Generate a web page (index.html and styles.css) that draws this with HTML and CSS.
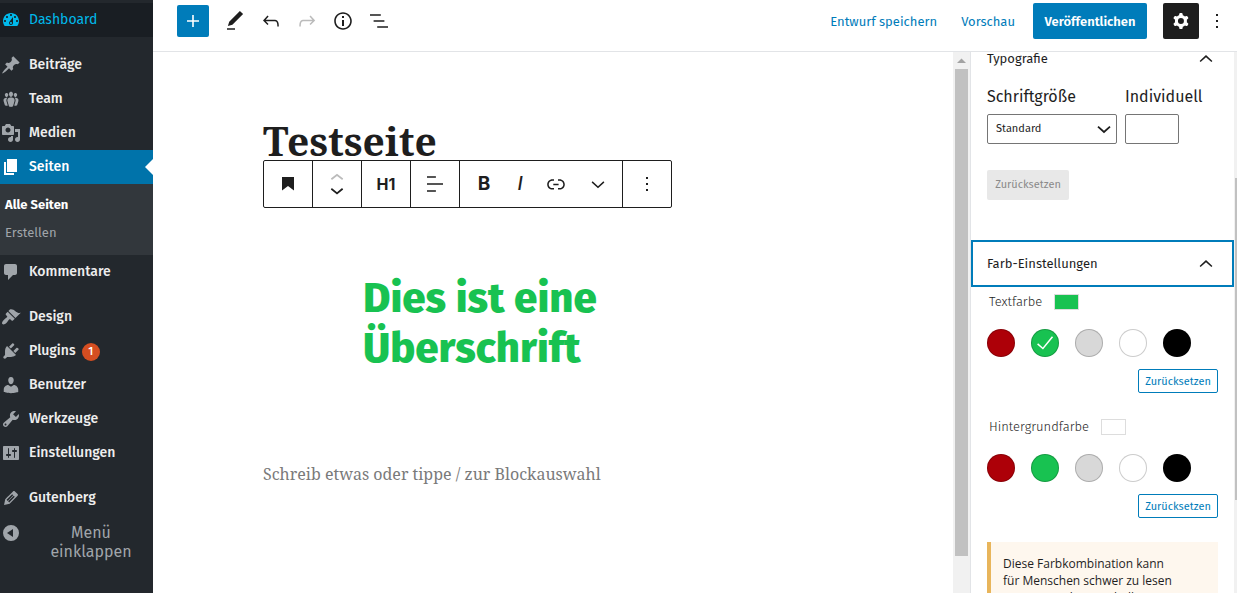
FILE: index.html
```html
<!DOCTYPE html>
<html lang="de">
<head>
<meta charset="utf-8">
<meta name="viewport" content="width=device-width, initial-scale=1">
<title>Testseite bearbeiten</title>
<link rel="stylesheet" href="styles.css">
</head>
<body>
<nav class="menu" aria-label="Hauptmenü">
  <ul class="menu-group">
    <li><a class="menu-item is-hover" href="#"><svg class="dash" viewBox="0 0 20 20"><path d="M3.76 16h12.48c1.1-1.37 1.76-3.11 1.76-5 0-4.42-3.58-8-8-8s-8 3.58-8 8c0 1.89.66 3.63 1.76 5zM10 4c.55 0 1 .45 1 1s-.45 1-1 1-1-.45-1-1 .45-1 1-1zM6 6c.55 0 1 .45 1 1s-.45 1-1 1-1-.45-1-1 .45-1 1-1zm8 0c.55 0 1 .45 1 1s-.45 1-1 1-1-.45-1-1 .45-1 1-1zm-5.370 5.550L12 7v6c0 1.100-.9 2-2 2s-2-.9-2-2c0-.57.24-1.080.63-1.450zM4 10c.55 0 1 .45 1 1s-.45 1-1 1-1-.45-1-1 .45-1 1-1zm12 0c.55 0 1 .45 1 1s-.45 1-1 1-1-.45-1-1 .45-1 1-1zm-5 3c0-.55-.45-1-1-1s-1 .45-1 1 .45 1 1 1 1-.45 1-1z"/></svg>Dashboard</a></li>
  </ul>
  <ul class="menu-group">
    <li><a class="menu-item" href="#"><svg class="dash" viewBox="0 0 20 20"><path d="M10.44 3.02l1.82-1.82 6.36 6.35-1.83 1.82c-1.05-.68-2.48-.57-3.41.36l-.75.75c-.92.93-1.04 2.35-.35 3.41l-1.83 1.82-2.41-2.41-2.8 2.79c-.42.42-3.38 2.71-3.8 2.29s1.86-3.39 2.28-3.81l2.79-2.79L4.1 9.36l1.83-1.82c1.05.69 2.48.57 3.4-.36l.75-.75c.93-.92 1.05-2.35.36-3.41z"/></svg>Beiträge</a></li>
    <li><a class="menu-item" href="#"><svg class="dash" viewBox="0 0 20 20"><path d="M8.03 4.46c-.29 1.28.55 3.46 1.97 3.46 1.41 0 2.25-2.18 1.96-3.46-.22-.98-1.08-1.63-1.96-1.63-.89 0-1.74.65-1.97 1.63zm-4.13.9c-.25 1.08.47 2.93 1.67 2.93s1.92-1.85 1.67-2.93c-.19-.83-.92-1.39-1.67-1.39s-1.48.56-1.67 1.39zm8.86 0c-.25 1.08.47 2.93 1.66 2.93 1.2 0 1.92-1.85 1.67-2.93-.19-.83-.92-1.39-1.67-1.39-.74 0-1.47.56-1.66 1.39zm-.59 11.43l1.25-4.3C14.2 10 12.71 8.47 10 8.47c-2.72 0-4.21 1.53-3.44 4.02l1.26 4.3C8.05 17.51 9 18 10 18c.98 0 1.94-.49 2.17-1.21zm-6.1-7.63c-.49.67-.96 1.83-.42 3.59l1.12 3.79c-.34.2-.77.31-1.2.31-.85 0-1.65-.41-1.85-1.03l-1.07-3.65c-.65-2.11.61-3.4 2.92-3.4.27 0 .54.02.79.06-.1.1-.2.22-.29.33zm8.35-.39c2.31 0 3.58 1.29 2.92 3.4l-1.07 3.65c-.2.62-1 1.03-1.85 1.03-.43 0-.86-.11-1.2-.31l1.11-3.77c.55-1.78.08-2.94-.42-3.61-.08-.11-.18-.23-.28-.33.25-.04.51-.06.79-.06z"/></svg>Team</a></li>
    <li><a class="menu-item" href="#"><svg class="dash" viewBox="0 0 20 20"><path d="M13 11V4c0-.55-.45-1-1-1h-1.67L9 1H5L3.67 3H2c-.55 0-1 .45-1 1v7c0 .55.45 1 1 1h10c.55 0 1-.45 1-1zM7 4.5c1.38 0 2.5 1.12 2.5 2.5S8.38 9.5 7 9.5 4.5 8.38 4.5 7 5.62 4.5 7 4.5zM14 6h5v10.5c0 1.38-1.12 2.5-2.5 2.5S14 17.88 14 16.5s1.12-2.5 2.5-2.5c.17 0 .34.02.5.05V9h-3V6zm-4 8.05V13h2v3.500c0 1.380-1.120 2.500-2.500 2.500S7 17.880 7 16.500 8.120 14 9.500 14c.17 0 .34.02.5.05z"/></svg>Medien</a></li>
    <li><a class="menu-item is-current" href="#" aria-current="page"><svg class="dash" viewBox="0 0 20 20"><path d="M6 15V2h10v13H6zm-1 1h8v2H3V5h2v11z"/></svg>Seiten</a>
      <ul class="submenu">
        <li><a class="submenu-item is-active" href="#">Alle Seiten</a></li>
        <li><a class="submenu-item" href="#">Erstellen</a></li>
      </ul>
    </li>
    <li><a class="menu-item" href="#"><svg class="dash" viewBox="0 0 20 20"><path d="M5 2h9c1.100 0 2 .9 2 2v7c0 1.100-.9 2-2 2h-2l-5 5v-5H5c-1.100 0-2-.9-2-2V4c0-1.100.9-2 2-2z"/></svg>Kommentare</a></li>
  </ul>
  <ul class="menu-group">
    <li><a class="menu-item" href="#"><svg class="dash" viewBox="0 0 20 20"><path d="M14.48 11.06L7.41 3.99l1.5-1.5c.5-.56 2.3-.47 3.51.32 1.21.8 1.43 1.28 2.91 2.1 1.18.64 2.45 1.26 4.45.85zm-.71.71L6.7 4.7 4.93 6.47c-.39.39-.39 1.02 0 1.41l1.06 1.06c.39.39.39 1.03 0 1.42-.6.6-1.43 1.11-2.21 1.69-.35.26-.7.53-1.01.84C1.43 14.23.4 16.08 1.4 17.07c.99 1 2.84-.03 4.18-1.36.31-.31.58-.66.85-1.02.57-.78 1.08-1.61 1.69-2.21.39-.39 1.02-.39 1.41 0l1.06 1.06c.39.39 1.02.39 1.41 0z"/></svg>Design</a></li>
    <li><a class="menu-item" href="#"><svg class="dash" viewBox="0 0 20 20"><path d="M13.11 4.36L9.87 7.6 8 5.73l3.24-3.24c.35-.34 1.05-.2 1.56.32.52.51.66 1.21.31 1.55zm-8 1.77l.91-1.12 9.01 9.01-1.19.84c-.71.71-2.63 1.16-3.82 1.16H6.14L4.9 17.26c-.59.59-1.54.59-2.12 0-.59-.58-.59-1.53 0-2.12l1.24-1.24v-3.88c0-1.13.4-3.19 1.09-3.89zm7.26 3.97l3.24-3.24c.34-.35 1.04-.21 1.55.31.52.51.66 1.21.31 1.55l-3.24 3.25z"/></svg>Plugins<span class="count">1</span></a></li>
    <li><a class="menu-item" href="#"><svg class="dash" viewBox="0 0 20 20"><path d="M10 9.25c-2.27 0-2.73-3.44-2.73-3.44C7 4.02 7.82 2 9.97 2c2.16 0 2.98 2.02 2.71 3.81 0 0-.41 3.44-2.68 3.44zm0 2.57L12.72 10c2.39 0 4.52 2.33 4.52 4.53v2.49s-3.65 1.13-7.24 1.13c-3.65 0-7.24-1.13-7.24-1.13v-2.49c0-2.25 1.94-4.48 4.47-4.48z"/></svg>Benutzer</a></li>
    <li><a class="menu-item" href="#"><svg class="dash" viewBox="0 0 20 20"><path d="M16.68 9.77c-1.34 1.34-3.3 1.67-4.95.99l-5.41 6.52c-.99.99-2.59.99-3.58 0s-.99-2.59 0-3.57l6.52-5.42c-.68-1.65-.35-3.61.99-4.95 1.28-1.28 3.12-1.62 4.72-1.06l-2.89 2.89 2.82 2.82 2.86-2.87c.53 1.58.18 3.39-1.08 4.65zM3.81 16.21c.4.39 1.04.39 1.43 0 .4-.4.4-1.04 0-1.43-.39-.4-1.03-.4-1.43 0-.39.39-.39 1.03 0 1.43z"/></svg>Werkzeuge</a></li>
    <li><a class="menu-item" href="#"><svg class="dash" viewBox="0 0 20 20"><path d="M18 16V4c0-.55-.45-1-1-1H3c-.55 0-1 .45-1 1v12c0 .55.45 1 1 1h14c.55 0 1-.45 1-1zM8 11h1c.55 0 1 .45 1 1s-.45 1-1 1H8v1.500c0 .28-.22.5-.5.5s-.5-.22-.5-.5V13H6c-.55 0-1-.45-1-1s.45-1 1-1h1V5.500c0-.28.22-.5.5-.5s.5.22.5.5V11zm5-2h-1c-.55 0-1-.45-1-1s.45-1 1-1h1V5.500c0-.28.22-.5.5-.5s.5.22.5.5V7h1c.55 0 1 .45 1 1s-.45 1-1 1h-1v5.500c0 .28-.22.5-.5.5s-.5-.22-.5-.5V9z"/></svg>Einstellungen</a></li>
  </ul>
  <ul class="menu-group">
    <li><a class="menu-item" href="#"><svg class="dash" viewBox="0 0 20 20"><path d="M13.89 3.39l2.71 2.72c.46.46.42 1.24.03 1.64l-8.01 8.02-5.56 1.16 1.16-5.58s7.6-7.63 7.99-8.03c.39-.39 1.22-.39 1.68.07zm-2.73 2.79l-5.59 5.61 1.11 1.11 5.54-5.65zm-2.97 8.23l5.58-5.6-1.07-1.08-5.59 5.6z"/></svg>Gutenberg</a></li>
  </ul>
  <button class="collapse" type="button"><svg class="dash" viewBox="0 0 20 20"><path fill-rule="evenodd" d="M10 2a8 8 0 1 1 0 16a8 8 0 0 1 0-16zM12 6v8l-6-4z"/></svg><span class="collapse-label">Menü einklappen</span></button>
</nav>

<div class="editor">
  <header class="topbar">
    <div class="tools">
      <button class="add" type="button" aria-label="Block hinzufügen"><svg class="icon" viewBox="0 0 24 24"><path d="M18 11.200h-5.200V6h-1.600v5.200H6v1.600h5.200V18h1.600v-5.200H18z"/></svg></button>
      <button class="tool" type="button" aria-label="Werkzeuge"><svg class="icon" viewBox="0 0 24 24"><path d="M20.100 5.100L16.900 2 6.200 12.700l-1.300 4.400 4.500-1.300L20.100 5.100zM4 20.800h8v-1.500H4v1.500z"/></svg></button>
      <button class="tool" type="button" aria-label="Rückgängig"><svg class="icon" viewBox="0 0 24 24"><path d="M18.300 11.700c-.6-.6-1.400-.9-2.300-.9H6.700l2.900-3.300-1.100-1-4.500 5L8.500 16l1-1-2.700-2.700H16c.5 0 .9.2 1.300.5 1 1 1 3.400 1 4.500v.3h1.500v-.2c0-1.500 0-4.300-1.500-5.700z"/></svg></button>
      <button class="tool" type="button" aria-label="Wiederholen" disabled><svg class="icon" viewBox="0 0 24 24"><path d="M15.600 6.500l-1.100 1 2.900 3.300H8c-.9 0-1.700.3-2.300.9-1.400 1.500-1.400 4.200-1.400 5.600v.2h1.500v-.3c0-1.100 0-3.500 1-4.500.3-.3.7-.5 1.300-.5h9.200L14.500 15l1.100 1.100 4.600-4.600-4.600-5z"/></svg></button>
      <button class="tool" type="button" aria-label="Details"><svg class="icon" viewBox="0 0 24 24"><path d="M12 3.200c-4.800 0-8.800 3.900-8.800 8.800 0 4.800 3.900 8.800 8.800 8.800 4.800 0 8.800-3.900 8.800-8.800 0-4.800-4-8.800-8.800-8.800zm0 16c-4 0-7.200-3.300-7.200-7.200C4.800 8 8 4.800 12 4.800s7.200 3.300 7.200 7.200c0 4-3.200 7.200-7.200 7.200zM11 17h2v-6h-2v6zm0-8h2V7h-2v2z"/></svg></button>
      <button class="tool" type="button" aria-label="Gliederung"><svg class="icon" viewBox="0 0 24 24"><path d="M13.800 5.200H3v1.500h10.800V5.200zm-3.600 12v1.500H21v-1.500H10.200zm7.200-6H6.600v1.500h10.800v-1.500z"/></svg></button>
    </div>
    <div class="actions">
      <button class="text-button" type="button">Entwurf speichern</button>
      <button class="text-button" type="button">Vorschau</button>
      <button class="publish" type="button">Veröffentlichen</button>
      <button class="settings" type="button" aria-label="Einstellungen"><svg class="icon" viewBox="0 0 24 24"><path fill-rule="evenodd" d="M10.289 4.836A1 1 0 0111.275 4h1.306a1 1 0 01.987.836l.244 1.466c.787.26 1.503.679 2.108 1.218l1.393-.522a1 1 0 011.216.437l.653 1.130a1 1 0 01-.23 1.273l-1.148.944a6.025 6.025 0 010 2.435l1.149.946a1 1 0 01.23 1.272l-.653 1.130a1 1 0 01-1.216.437l-1.394-.522c-.605.54-1.320.958-2.108 1.218l-.244 1.466a1 1 0 01-.987.836h-1.306a1 1 0 01-.986-.836l-.244-1.466a5.995 5.995 0 01-2.108-1.218l-1.394.522a1 1 0 01-1.217-.436l-.653-1.131a1 1 0 01.23-1.272l1.149-.946a6.026 6.026 0 010-2.435l-1.148-.944a1 1 0 01-.23-1.272l.653-1.131a1 1 0 011.217-.437l1.393.522a5.994 5.994 0 012.108-1.218l.244-1.466zM14.929 12a3 3 0 11-6 0 3 3 0 016 0z"/></svg></button>
      <button class="tool" type="button" aria-label="Optionen"><svg class="icon" viewBox="0 0 24 24"><path d="M13 19h-2v-2h2v2zm0-6h-2v-2h2v2zm0-6h-2V5h2v2z"/></svg></button>
    </div>
  </header>

  <div class="workspace">
    <main class="canvas">
      <div class="column">
        <h1 class="page-title">Testseite</h1>
        <div class="block-toolbar" role="toolbar" aria-label="Block-Werkzeuge">
          <div class="segment"><button class="block-button" type="button" aria-label="Überschrift"><svg class="icon" viewBox="0 0 24 24"><path d="M6 5v13.600l6-4.700 6 4.700V5z"/></svg></button></div>
          <div class="segment movers">
            <button class="mover" type="button" aria-label="Nach oben" disabled><svg viewBox="4 6 16 10"><path d="M6.500 12.400L12 8l5.500 4.400-.9 1.200L12 10l-4.500 3.600-1-1.200z"/></svg></button>
            <button class="mover" type="button" aria-label="Nach unten"><svg viewBox="4 8 16 10"><path d="M17.500 11.600L12 16l-5.500-4.400.9-1.200L12 14l4.500-3.600 1 1.200z"/></svg></button>
          </div>
          <div class="segment"><button class="block-button level" type="button">H1</button></div>
          <div class="segment"><button class="block-button" type="button" aria-label="Ausrichtung"><svg class="icon" viewBox="0 0 24 24"><path d="M4 19.800h8.900v-1.500H4v1.500zm8.900-15.600H4v1.500h8.900V4.200zm-8.900 7v1.500h16v-1.500H4z"/></svg></button></div>
          <div class="segment formats">
            <button class="block-button bold" type="button" aria-label="Fett">B</button>
            <button class="block-button italic" type="button" aria-label="Kursiv">I</button>
            <button class="block-button" type="button" aria-label="Link"><svg class="icon" viewBox="0 0 24 24"><path d="M15.600 7.200H14v1.500h1.600c2 0 3.700 1.700 3.700 3.700s-1.700 3.700-3.700 3.700H14v1.500h1.600c2.800 0 5.200-2.300 5.200-5.200 0-2.900-2.300-5.200-5.200-5.200zM4.700 12.400c0-2 1.700-3.700 3.700-3.700H10V7.200H8.400c-2.900 0-5.200 2.300-5.200 5.200 0 2.900 2.300 5.200 5.200 5.200H10v-1.500H8.400c-2 0-3.700-1.700-3.700-3.700zm4.600.9h5.300v-1.500H9.300v1.500z"/></svg></button>
            <button class="block-button more-formats" type="button" aria-label="Mehr"><svg class="icon" viewBox="0 0 24 24"><path d="M18.400 10.400L12 16.200l-6.400-5.800 1-1.200L12 14.200l5.400-5z"/></svg></button>
          </div>
          <div class="segment"><button class="block-button" type="button" aria-label="Weitere Optionen"><svg class="icon" viewBox="0 0 24 24"><path d="M13 19h-2v-2h2v2zm0-6h-2v-2h2v2zm0-6h-2V5h2v2z"/></svg></button></div>
        </div>
        <h2 class="heading">Dies ist eine Überschrift</h2>
        <p class="prompt">Schreib etwas oder tippe / zur Blockauswahl</p>
      </div>
    </main>
    <div class="scrollbar" aria-hidden="true"><svg class="scroll-arrow" viewBox="0 0 13 17"><path d="M2 11l4.500-4.500L11 11z"/></svg><div class="thumb"></div></div>

    <aside class="panel">
      <section class="typography">
        <button class="section-toggle first" type="button" aria-expanded="true">Typografie<svg class="icon" viewBox="0 0 24 24"><path d="M5.600 13.900L12 8.100l6.400 5.800-1 1.200L12 10.200l-5.400 4.900z"/></svg></button>
        <div class="fields">
          <div class="field size"><label for="size">Schriftgröße</label>
            <div class="select-wrap"><select id="size"><option>Standard</option></select><svg class="icon select-arrow" viewBox="0 0 24 24"><path d="M18.600 10.300L12 16.300l-6.600-6 1.200-1.400L12 13.800l5.400-4.900z"/></svg></div></div>
          <div class="field custom"><label for="custom">Individuell</label><input id="custom" type="text"></div>
        </div>
        <button class="reset-disabled" type="button" disabled>Zurücksetzen</button>
      </section>
      <section class="colors">
        <button class="section-toggle is-focused" type="button" aria-expanded="true">Farb-Einstellungen<svg class="icon" viewBox="0 0 24 24"><path d="M5.600 13.900L12 8.100l6.400 5.800-1 1.200L12 10.200l-5.400 4.900z"/></svg></button>
        <div class="color-control">
          <div class="color-label">Textfarbe<span class="indicator green"></span></div>
          <div class="swatches">
            <button class="swatch red" type="button" aria-label="Rot"></button>
            <button class="swatch green" type="button" aria-label="Grün" aria-pressed="true"><svg class="icon" viewBox="0 0 24 24"><path d="M18.900 5.200L9.800 16.400l-4.700-4.100-1 1.100 5.900 5.200L20.100 6.200z"/></svg></button>
            <button class="swatch gray" type="button" aria-label="Grau"></button>
            <button class="swatch white" type="button" aria-label="Weiß"></button>
            <button class="swatch black" type="button" aria-label="Schwarz"></button>
          </div>
          <button class="reset" type="button">Zurücksetzen</button>
        </div>
        <div class="color-control">
          <div class="color-label">Hintergrundfarbe<span class="indicator white"></span></div>
          <div class="swatches">
            <button class="swatch red" type="button" aria-label="Rot"></button>
            <button class="swatch green" type="button" aria-label="Grün"></button>
            <button class="swatch gray" type="button" aria-label="Grau"></button>
            <button class="swatch white" type="button" aria-label="Weiß"></button>
            <button class="swatch black" type="button" aria-label="Schwarz"></button>
          </div>
          <button class="reset" type="button">Zurücksetzen</button>
        </div>
        <p class="notice">Diese Farbkombination kann für Menschen schwer zu lesen sein. Versuche eine hellere</p>
      </section>
    </aside>
    <div class="page-scroll" aria-hidden="true"><div class="page-thumb"></div></div>
  </div>
</div>
</body>
</html>
```
FILE: styles.css
```css
* { box-sizing: border-box; }

:root {
  --ui: "Fira Sans", "Noto Sans", sans-serif;
  --serif: "Noto Serif", "DejaVu Serif Condensed", "DejaVu Serif", serif;
  --blue: #007cba;
  --ink: #1e1e1e;
  --line: #e2e4e7;
  --green: #18c251;
}

body {
  display: flex;
  height: 100vh;
  margin: 0;
  overflow: hidden;
  background: #fff;
  color: var(--ink);
  font: 13px/20px var(--ui);
}

button {
  display: flex;
  align-items: center;
  justify-content: center;
  padding: 0;
  border: 0;
  background: none;
  color: inherit;
  font: inherit;
  cursor: pointer;
}

svg { display: block; flex: none; fill: currentColor; }
.icon { width: 24px; height: 24px; }

/* Admin menu */
.menu {
  flex: none;
  width: 153px;
  padding-top: 3px;
  background: #23282d;
  color: #eee;
}
.menu ul { margin: 0; padding: 0; list-style: none; }
.menu .menu-group { margin-bottom: 11px; }
.menu .menu-group:nth-of-type(4) { margin-bottom: 0; }
.dash { width: 20px; height: 20px; color: #a0a5aa; }
.menu-item {
  position: relative;
  display: flex;
  align-items: center;
  gap: 8px;
  height: 34px;
  padding-left: 1px;
  color: #eee;
  font-size: 14px;
  font-weight: 500;
  text-decoration: none;
}
.is-hover { background: #191e23; color: #00b9eb; font-weight: 400; }
.is-hover .dash { color: #00b9eb; }
.is-current { background: #0073aa; color: #fff; }
.is-current .dash { color: #fff; }
.is-current::after {
  content: "";
  position: absolute;
  top: 9px;
  right: 0;
  border: 8px solid transparent;
  border-left-width: 0;
  border-right-color: #fff;
}
.count {
  width: 18px;
  height: 18px;
  margin: 2px 0 0 -2px;
  border-radius: 50%;
  background: #d54e21;
  color: #fff;
  font-size: 11px;
  line-height: 18px;
  text-align: center;
}
.menu .submenu { padding: 7px 5px 8px; background: #32373c; }
.submenu-item {
  display: block;
  color: #a0a5aa;
  line-height: 28px;
  text-decoration: none;
}
.is-active { color: #fff; font-weight: 700; }
.collapse {
  align-items: flex-start;
  gap: 8px;
  width: 100%;
  padding: 8px 0 8px 1px;
  color: #a0a5aa;
  font-size: 16px;
  line-height: 19px;
}
.collapse-label { flex: 1; }

/* Top bar */
.editor { display: flex; flex: 1; flex-direction: column; min-width: 0; }
.topbar {
  display: flex;
  justify-content: space-between;
  flex: none;
  height: 52px;
  padding: 3px 2px 12px 24px;
  border-bottom: 1px solid var(--line);
}
.tools, .actions { display: flex; align-items: center; }
.add {
  width: 32px;
  height: 32px;
  margin-right: 8px;
  border-radius: 2px;
  background: var(--blue);
  color: #fff;
}
.tool { width: 36px; height: 36px; }
.tool:disabled { color: #bbb; }
.text-button { margin-right: 24px; padding-top: 2px; color: var(--blue); }
.text-button:nth-child(2) { margin-right: 18px; }
.publish {
  width: 114px;
  height: 36px;
  margin-right: 16px;
  padding-top: 2px;
  border-radius: 2px;
  background: var(--blue);
  color: #fff;
  font-weight: 600;
}
.settings { width: 36px; height: 36px; border-radius: 2px; background: var(--ink); color: #fff; }

/* Canvas */
.workspace { display: flex; flex: 1; min-height: 0; }
.canvas { flex: 1; min-width: 0; padding: 70px 110px 0; }
.page-title { margin: 0; font: 700 39px/38px var(--serif); }
.block-toolbar {
  display: flex;
  width: max-content;
  height: 48px;
  border: 1px solid var(--ink);
  border-radius: 2px;
  background: #fff;
}
.segment { display: flex; justify-content: center; width: 49px; border-right: 1px solid var(--ink); }
.segment:last-child { width: 48px; border-right: 0; }
.block-button { width: 36px; height: 46px; }
.formats { width: 163px; padding-left: 6px; }
.formats .more-formats { flex: 1; }
.level { font: 700 16px/24px Inter, sans-serif; }
.bold { font: 700 19px/24px Inter, sans-serif; }
.italic { font: italic 500 19px/24px Inter, sans-serif; }
.movers { flex-direction: column; align-items: center; gap: 4px; }
.mover { width: 24px; height: 10px; }
.mover svg { width: 18px; height: 12px; }
.mover:disabled { color: #bbb; }
.heading {
  max-width: 290px;
  margin: 65px 0 0 100px;
  color: var(--green);
  font: 800 42px/50px var(--ui);
}
.prompt { margin: 87px 0 0; color: #7a7a7a; font: 16px/28px var(--serif); }

.scrollbar { flex: none; width: 17px; padding: 0 2px; background: #f1f1f1; }
.scroll-arrow { width: 13px; height: 17px; color: #a3a3a3; }
.thumb { height: 90%; background: #c1c1c1; }

/* Settings panel */
.panel {
  flex: none;
  width: 264px;
  overflow: hidden;
  border-left: 1px solid var(--line);
}
.section-toggle {
  justify-content: space-between;
  width: 100%;
  height: 47px;
  padding: 0 16px;
}
.first { height: 14px; }
.is-focused { border: 2px solid var(--blue); padding: 0 14px; }
.fields { display: flex; gap: 8px; padding: 18px 16px 0; }
.field { display: flex; flex-direction: column; gap: 5px; }
.field label { font-size: 16px; line-height: 25px; }
.size { width: 130px; }
.select-wrap { position: relative; }
select, input {
  display: block;
  height: 30px;
  border: 1px solid #757575;
  border-radius: 2px;
  background: #fff;
  color: inherit;
  font: 11px/20px var(--ui);
}
select { width: 100%; padding: 0 8px; appearance: none; }
input { width: 54px; }
.select-arrow { position: absolute; top: 3px; right: 1px; pointer-events: none; }
.reset-disabled {
  width: 82px;
  height: 30px;
  margin: 26px 16px 40px;
  border-radius: 2px;
  background: #e8e8e8;
  color: #8a8a8a;
  font-size: 11px;
}
.color-control {
  display: flex;
  flex-direction: column;
  padding: 5px 16px 19px;
}
.color-label {
  display: flex;
  align-items: center;
  gap: 12px;
  padding-left: 2px;
  font-weight: 300;
}
.indicator { width: 25px; height: 16px; border: 1px solid #ddd; }
.swatches { display: flex; gap: 16px; padding: 17px 0 12px; }
.swatch { width: 28px; height: 28px; border: 1px solid rgb(0 0 0 / 20%); border-radius: 50%; }
.red { background: #ad0008; }
.green { background: var(--green); color: #fff; }
.gray { background: #d8d8d8; }
.white { background: #fff; }
.black { background: #000; }
.reset {
  align-self: flex-end;
  width: 80px;
  height: 24px;
  padding-top: 1px;
  border: 1px solid var(--blue);
  border-radius: 2px;
  color: var(--blue);
  font-size: 11px;
}
.notice {
  margin: 5px 16px 0;
  padding: 13px 40px 12px 12px;
  border-left: 4px solid #e8b55b;
  background: #fef7ee;
  font: 12px/17px "Open Sans", "Noto Sans", sans-serif;
}
.page-scroll { flex: none; width: 3px; padding-top: 126px; background: #f1f1f1; }
.page-thumb { height: 322px; margin-left: 1px; background: #c1c1c1; }
```
